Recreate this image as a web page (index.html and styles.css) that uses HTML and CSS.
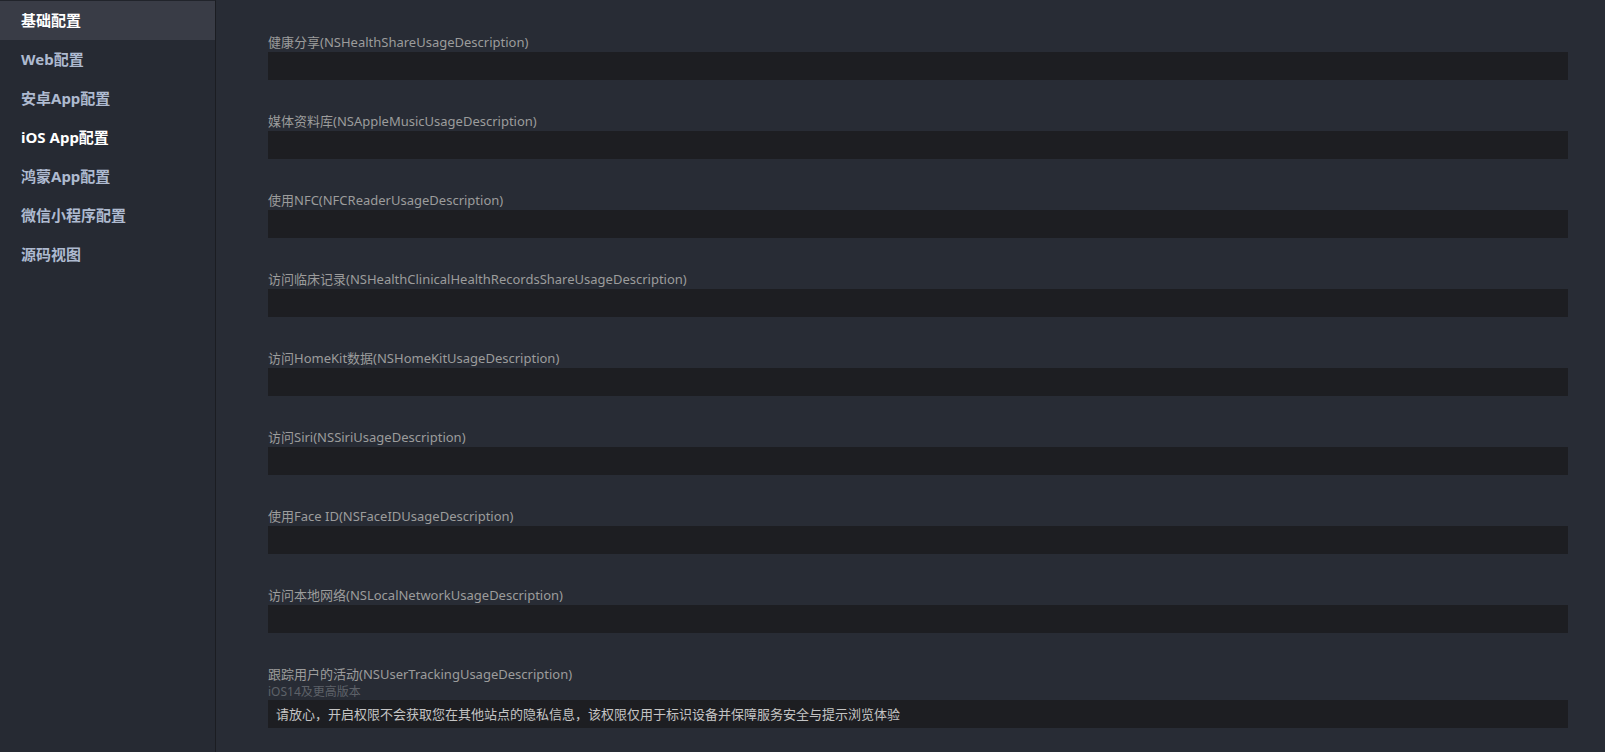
FILE: index.html
```html
<!DOCTYPE html>
<html lang="zh">
<head>
<meta charset="utf-8">
<link rel="stylesheet" href="styles.css">
</head>
<body>
<div class="app">
  <nav class="sidebar">
    <div class="nav-item active">基础配置</div>
    <div class="nav-item">Web配置</div>
    <div class="nav-item">安卓App配置</div>
    <div class="nav-item current">iOS App配置</div>
    <div class="nav-item">鸿蒙App配置</div>
    <div class="nav-item">微信小程序配置</div>
    <div class="nav-item">源码视图</div>
  </nav>
  <main class="content">
    <div class="field"><div class="label">健康分享(NSHealthShareUsageDescription)</div><div class="input"></div></div>
    <div class="field"><div class="label">媒体资料库(NSAppleMusicUsageDescription)</div><div class="input"></div></div>
    <div class="field"><div class="label">使用NFC(NFCReaderUsageDescription)</div><div class="input"></div></div>
    <div class="field"><div class="label">访问临床记录(NSHealthClinicalHealthRecordsShareUsageDescription)</div><div class="input"></div></div>
    <div class="field"><div class="label">访问HomeKit数据(NSHomeKitUsageDescription)</div><div class="input"></div></div>
    <div class="field"><div class="label">访问Siri(NSSiriUsageDescription)</div><div class="input"></div></div>
    <div class="field"><div class="label">使用Face ID(NSFaceIDUsageDescription)</div><div class="input"></div></div>
    <div class="field"><div class="label">访问本地网络(NSLocalNetworkUsageDescription)</div><div class="input"></div></div>
    <div class="field"><div class="label">跟踪用户的活动(NSUserTrackingUsageDescription)</div><div class="hint">iOS14及更高版本</div><div class="input">请放心，开启权限不会获取您在其他站点的隐私信息，该权限仅用于标识设备并保障服务安全与提示浏览体验</div></div>
  </main>
</div>
</body>
</html>
```
FILE: styles.css
```css
html, body {
  margin: 0;
  padding: 0;
  height: 100%;
  overflow: hidden;
}
body {
  background: #282c35;
  font-family: "Microsoft YaHei", "Noto Sans", "Noto Sans CJK SC", sans-serif;
}
.app {
  display: flex;
  height: 752px;
}
.sidebar {
  width: 215px;
  flex: none;
  background: #262a33;
  border-right: 1px solid #1b1d22;
  border-top: 1px solid #21242b;
  box-sizing: content-box;
}
.nav-item {
  height: 39px;
  line-height: 38px;
  padding-left: 21px;
  font-size: 15px;
  font-weight: bold;
  color: #aebad0;
}
.nav-item.active {
  background: #393c46;
  color: #ffffff;
}
.nav-item.current {
  color: #ffffff;
}
.content {
  flex: 1;
  padding: 35px 37px 0 52px;
}
.field {
  margin-bottom: 34px;
}
.label {
  font-size: 13px;
  line-height: 15px;
  padding-bottom: 2px;
  color: #9c9c9c;
  white-space: nowrap;
}
.hint {
  font-size: 12px;
  line-height: 16px;
  color: #5e6269;
}
.input {
  height: 28px;
  background: #1d1e22;
  font-size: 13px;
  line-height: 28px;
  color: #c4c4c4;
  padding-left: 8px;
}
```
